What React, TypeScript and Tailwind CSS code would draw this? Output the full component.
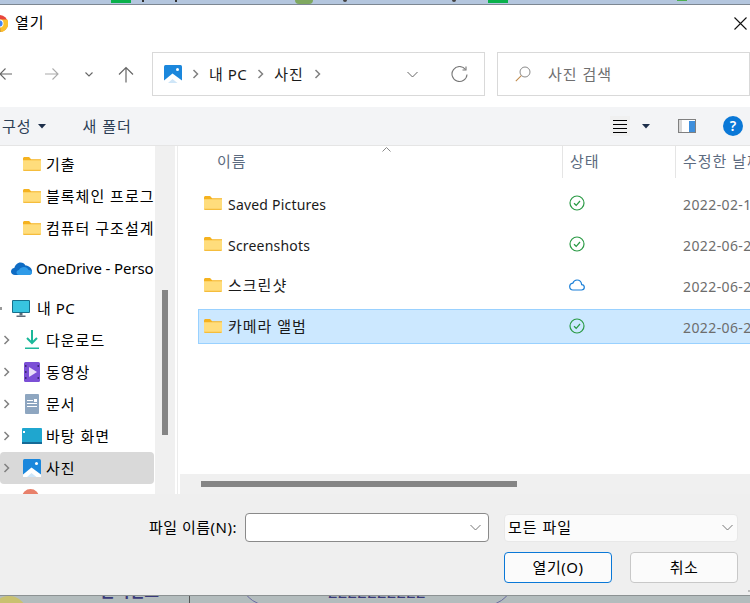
const FONT = "font-['Noto_Sans','Noto_Sans_CJK_KR',sans-serif]";
const KO = "text-[15px] tracking-[1px]";

function Folder({ className = "" }: { className?: string }) {
  return (
    <svg width="18" height="14" viewBox="0 0 18 14" className={className}>
      <path d="M0 1.5C0 .7.7 0 1.5 0h4.6l2 2.2H18V4H0z" fill="#f5b21f" />
      <path d="M0 3.2h18v9.6c0 .7-.5 1.2-1.2 1.2H1.2C.5 14 0 13.500 0 12.800z" fill="#ffdd7c" />
      <path d="M0 12.800h18c0 .7-.5 1.200-1.200 1.200H1.200C.5 14 0 13.500 0 12.800z" fill="#f5bd3c" />
    </svg>
  );
}

function Pictures({ size = 18 }: { size?: number }) {
  return (
    <svg width={size} height={size} viewBox="0 0 18 18">
      <rect width="18" height="18" rx="1.500" fill="#1b87dc" />
      <path d="M0 18V15.500L8.500 8.500L18 15.500V18z" fill="#fff" />
      <path d="M4 18L8.500 14L13.500 18z" fill="#cfe6f8" />
      <circle cx="13.500" cy="4.500" r="1.500" fill="#fff" />
    </svg>
  );
}

function Chevron() {
  return (
    <svg width="7" height="10" viewBox="0 0 7 10" className="shrink-0">
      <path d="M1.500 1L5.500 5L1.500 9" fill="none" stroke="#808080" strokeWidth="1.500" />
    </svg>
  );
}

function Down({ color = "#666" }: { color?: string }) {
  return (
    <svg width="11" height="7" viewBox="0 0 11 7">
      <path d="M.5 1L5.500 6L10.500 1" fill="none" stroke={color} strokeWidth="1" />
    </svg>
  );
}

function Caret() {
  return (
    <svg width="8" height="5" viewBox="0 0 8 5">
      <path d="M0 0H8L4 4.500z" fill="#1c2e4a" />
    </svg>
  );
}

function NavRow({ chevron, icon, label, selected }: { chevron?: boolean; icon: React.ReactNode; label: string; selected?: boolean }) {
  return (
    <div className={`h-8 w-[154px] shrink-0 flex items-center rounded-sm overflow-hidden ${selected ? "bg-[#d9d9d9]" : ""}`}>
      <div className="w-[20px] shrink-0 pl-[3px] flex items-center">{chevron ? <Chevron /> : null}</div>
      <div className="w-[26px] shrink-0 flex items-center justify-center -ml-[1px]">{icon}</div>
      <span className={`ml-[1px] ${KO} text-black whitespace-nowrap`}>{label}</span>
    </div>
  );
}

function Check() {
  return (
    <svg width="16" height="16" viewBox="0 0 16 16">
      <circle cx="8" cy="8" r="7" fill="none" stroke="#2a9a45" strokeWidth="1.200" />
      <path d="M5 8.200L7.200 10.300L11 6" fill="none" stroke="#2a9a45" strokeWidth="1.200" />
    </svg>
  );
}

function Cloud() {
  return (
    <svg width="16" height="12" viewBox="0 0 16 12">
      <path d="M4 11H12.500C14.200 11 15.300 9.800 15.300 8.300C15.300 6.800 14.200 5.700 12.700 5.600C12.300 3 10.500 1 8 1C6 1 4.500 2.200 3.800 4.200C2 4.400 .7 5.800 .7 7.600C.7 9.600 2.200 11 4 11z" fill="none" stroke="#1a7fd8" strokeWidth="1.200" />
    </svg>
  );
}

function FileRow({ name, date, status, selected, korean }: { name: string; date: string; status: React.ReactNode; selected?: boolean; korean?: boolean }) {
  return (
    <div className={`h-[35px] flex items-center border-y overflow-hidden ${selected ? "bg-[#cce8ff] border-[#99d1ff] border-l" : "border-transparent border-l border-l-transparent"}`}>
      <Folder className="ml-[5px] shrink-0 -mt-[2px]" />
      <span className={`ml-[6px] w-[341px] shrink-0 text-[#1a1a1a] whitespace-nowrap ${korean ? KO : "text-[14px] tracking-[0.2px] mt-[2px]"}`}>{name}</span>
      <div className="w-[16px] shrink-0 flex justify-center -mt-[2px]">{status}</div>
      <span className="ml-[98px] mt-[2px] text-[14px] tracking-[0.4px] text-[#6d6d6d] whitespace-nowrap">{date}</span>
    </div>
  );
}

export default function App() {
  return (
    <div className={`w-[750px] h-[603px] overflow-hidden flex flex-col bg-white ${FONT}`}>
      {/* window behind, top */}
      <div className="h-[5px] shrink-0 bg-[#b4c6de] border-b border-[#7d8792] flex items-start">
        <div className="ml-[111px] w-[20px] h-[3px] bg-[#0ab14b]" />
        <div className="ml-[11px] w-[2px] h-[2px] bg-[#333]" />
        <div className="ml-[31px] w-[2px] h-[2px] bg-[#333]" />
        <div className="ml-[118px] w-[18px] h-[4px] rounded-b bg-[#7fa860]" />
        <div className="ml-[30px] w-[4px] h-[2px] rounded-b bg-[#444]" />
        <div className="ml-[105px] w-[4px] h-[2px] rounded-b bg-[#444]" />
        <div className="ml-[32px] w-[20px] h-[3px] bg-[#0ab14b]" />
        <div className="ml-[169px] w-[10px] h-[1px] bg-[#4caf50]" />
      </div>

      {/* title */}
      <div className="h-[36px] shrink-0 flex items-center">
        <svg width="17" height="17" viewBox="0 0 17 17" className="-ml-[9px] shrink-0">
          <circle cx="8.500" cy="8.500" r="8.500" fill="#e8453c" />
          <path d="M8.500 8.500L1.100 13a8.500 8.500 0 0 0 8.500 3.900z" fill="#34a853" />
          <path d="M8.500 4.500H16.300A8.500 8.500 0 0 1 9.500 17z" fill="#fbc02d" />
          <circle cx="8.500" cy="8.500" r="4" fill="#fff" />
          <circle cx="8.500" cy="8.500" r="3.100" fill="#4285f4" />
        </svg>
        <span className={`ml-[7px] ${KO} text-black -mt-[2px]`}>열기</span>
        <svg width="13" height="13" viewBox="0 0 13 13" className="ml-auto mr-[3px]">
          <path d="M.5 .5L12.500 12.500M12.500 .5L.5 12.500" stroke="#111" strokeWidth="1.100" />
        </svg>
      </div>

      {/* nav */}
      <div className="h-[66px] shrink-0 flex items-center">
        <svg width="14" height="14" viewBox="0 0 14 14" className="-ml-[1px] shrink-0">
          <path d="M13 7H1M6.500 1.500L1 7L6.500 12.500" fill="none" stroke="#666" strokeWidth="1.100" />
        </svg>
        <svg width="15" height="14" viewBox="0 0 15 14" className="ml-[31px] shrink-0">
          <path d="M1 7H14M8.500 1.500L14 7L8.500 12.500" fill="none" stroke="#aaa" strokeWidth="1.100" />
        </svg>
        <div className="ml-[26px]"><svg width="8" height="5" viewBox="0 0 8 5" className="block"><path d="M.5 .5L4 4L7.500 .5" fill="none" stroke="#666" strokeWidth="1.100" /></svg></div>
        <svg width="16" height="17" viewBox="0 0 16 17" className="ml-[25px] shrink-0">
          <path d="M8 16.500V1.500M1 8.500L8 1.500L15 8.500" fill="none" stroke="#666" strokeWidth="1.200" />
        </svg>
        <div className="ml-[18px] w-[333px] h-[44px] shrink-0 border border-[#d9d9d9] flex items-center">
          <div className="ml-[11px]"><Pictures /></div>
          <div className="ml-[10px]"><Chevron /></div>
          <span className="ml-[10px] text-[15px] tracking-[0.5px] text-[#1a1a1a] whitespace-nowrap">내 PC</span>
          <div className="ml-[10px]"><Chevron /></div>
          <span className={`ml-[10px] ${KO} text-[#1a1a1a]`}>사진</span>
          <div className="ml-[10px]"><Chevron /></div>
          <div className="ml-auto"><Down /></div>
          <svg width="17" height="17" viewBox="0 0 17 17" className="ml-[33px] mr-[16px]">
            <path d="M14.500 3.500A7.500 7.500 0 1 0 16 8.500" fill="none" stroke="#777" strokeWidth="1.100" />
            <path d="M15 .5V4H11.500" fill="none" stroke="#777" strokeWidth="1.100" />
          </svg>
        </div>
        <div className="ml-[12px] w-[253px] h-[44px] shrink-0 border border-[#d9d9d9] flex items-center">
          <svg width="16" height="16" viewBox="0 0 16 16" className="ml-[17px]">
            <circle cx="10" cy="6" r="5" fill="none" stroke="#8a8a8a" strokeWidth="1" />
            <path d="M6.300 9.700L.8 15.200" stroke="#c08a4a" strokeWidth="1.100" />
          </svg>
          <span className={`ml-[17px] ${KO} text-[#6f6f6f]`}>사진 검색</span>
        </div>
      </div>

      {/* toolbar */}
      <div className={`h-[39px] shrink-0 bg-[#f3f4f6] border-b border-[#e5e5e5] flex items-center ${KO} text-[#2c3e55]`}>
        <span className="ml-[2px] whitespace-nowrap">구성</span>
        <div className="ml-[6px]"><Caret /></div>
        <span className="ml-[37px] whitespace-nowrap">새 폴더</span>
        <div className="ml-auto w-[20px] h-[20px] bg-[#f0f0f0] flex flex-col justify-center gap-[3px] px-[3px]">
          <div className="h-px bg-black" />
          <div className="h-px bg-black" />
          <div className="h-px bg-black" />
          <div className="h-px bg-black" />
        </div>
        <div className="ml-[12px]"><Caret /></div>
        <svg width="18" height="14" viewBox="0 0 18 14" className="ml-[28px]">
          <rect x=".5" y=".5" width="17" height="13" fill="#fff" stroke="#808080" />
          <rect x="1" y="1" width="3" height="12" fill="#d8d8d8" />
          <rect x="11" y="2" width="6" height="11" fill="#3f8fdc" />
        </svg>
        <div className="ml-[27px] mr-[7px] w-[20px] h-[20px] rounded-full bg-[#0a78d7] flex items-center justify-center text-white text-[14px] tracking-normal font-semibold leading-none">?</div>
      </div>

      {/* main */}
      <div className="h-[348px] shrink-0 flex">
        <div className="w-[155px] shrink-0 overflow-hidden flex flex-col pt-[2px]">
          <NavRow icon={<Folder />} label="기출" />
          <NavRow icon={<Folder />} label="블록체인 프로그램" />
          <NavRow icon={<Folder />} label="컴퓨터 구조설계" />
          <div className="h-2 shrink-0" />
          <div className="h-8 w-[155px] shrink-0 flex items-center overflow-hidden">
            <svg width="21" height="13" viewBox="0 0 21 13" className="ml-[11px] shrink-0">
              <path d="M4 13C1.700 13 0 11.500 0 9.500C0 7.500 1.500 6.200 3.300 6C4 3 6.500 .5 9.500 .5C11.800 .5 13.500 1.700 14.500 3.500C17.500 3.500 21 6 21 9.500C21 11.500 19.500 13 17.500 13z" fill="#0f6cc4" />
              <path d="M8 13C6.500 13 5.500 12 5.500 10.500C5.500 9 6.800 8 8 8C9 5.800 11 5 13 5C15.500 5 17 6.500 17.500 8C19.500 8 21 9 21 10.500C21 12 20 13 18.500 13z" fill="#2f9be8" />
            </svg>
            <span className="ml-[4px] text-[15px] tracking-[-0.1px] text-black whitespace-nowrap">OneDrive - Perso</span>
          </div>
          <div className="h-2 shrink-0" />
          <div className="h-8 w-[154px] shrink-0 flex items-center">
            <div className="w-[2px] h-[3px] bg-[#999] shrink-0" />
            <svg width="18" height="17" viewBox="0 0 18 17" className="ml-[10px] shrink-0">
              <rect width="18" height="13" rx="1" fill="#17708c" />
              <rect x="1" y="1" width="16" height="11" fill="#38c4e0" />
              <rect x="7.500" y="13" width="3" height="2.500" fill="#5f6b78" />
              <rect x="4.500" y="15.500" width="9" height="1.500" fill="#5f6b78" />
            </svg>
            <span className="ml-[7px] text-[15px] tracking-[0.5px] text-black whitespace-nowrap">내 PC</span>
          </div>
          <NavRow
            chevron
            icon={
              <svg width="14" height="20" viewBox="0 0 14 20">
                <path d="M7 0V13M2 8L7 13L12 8" fill="none" stroke="#1cb89a" strokeWidth="2" />
                <rect y="17.500" width="14" height="1.500" fill="#1cb89a" />
              </svg>
            }
            label="다운로드"
          />
          <NavRow
            chevron
            icon={
              <svg width="16" height="20" viewBox="0 0 16 20">
                <rect width="16" height="20" rx="1.500" fill="#7b4fd6" />
                <path d="M5 5V15L13 10z" fill="#e8ddf8" />
                <rect x="1" y="3" width="1.500" height="2" fill="#3c2a78" />
                <rect x="1" y="9" width="1.500" height="2" fill="#3c2a78" />
                <rect x="1" y="15" width="1.500" height="2" fill="#3c2a78" />
                <rect x="13.500" y="3" width="1.500" height="2" fill="#3c2a78" />
                <rect x="13.500" y="15" width="1.500" height="2" fill="#3c2a78" />
              </svg>
            }
            label="동영상"
          />
          <NavRow
            chevron
            icon={
              <svg width="14" height="20" viewBox="0 0 14 20">
                <rect width="14" height="20" rx="1" fill="#8ea6c0" />
                <rect x="2" y="6" width="6" height="1" fill="#fff" />
                <rect x="2" y="9" width="10" height="1" fill="#fff" />
                <rect x="2" y="12" width="10" height="1" fill="#fff" />
                <rect x="9" y="5" width="3" height="3" fill="#fff" />
              </svg>
            }
            label="문서"
          />
          <NavRow
            chevron
            icon={
              <svg width="20" height="16" viewBox="0 0 20 16">
                <rect width="20" height="16" rx="1" fill="#1fa6cf" />
                <rect y="14" width="20" height="2" fill="#156a96" />
                <rect x="1" y="3" width="2" height="2" fill="#fff" />
              </svg>
            }
            label="바탕 화면"
          />
          <NavRow chevron icon={<Pictures />} label="사진" selected />
          <div className="h-8 shrink-0 flex items-start pl-[22px] pt-[5px]">
            <div className="w-[17px] h-[17px] rounded-full bg-[#e8806a]" />
          </div>
        </div>
        <div className="w-[20px] shrink-0 bg-[#f0f0f0] pl-[7px] pt-[144px]">
          <div className="w-[6px] h-[145px] bg-[#858585]" />
        </div>
        <div className="w-[2px] shrink-0 bg-white" />
        <div className="w-px shrink-0 bg-[#ececec]" />
        <div className="w-[2px] shrink-0 bg-white" />
        <div className="flex-1 min-w-0 flex flex-col">
          <div className="flex-1 min-h-0 overflow-hidden flex flex-col">
            <div className={`h-[32px] shrink-0 flex ${KO} text-[#5c6b80]`}>
              <div className="w-[382px] shrink-0 flex pl-[37px] pt-[4px] relative">
                <span>이름</span>
                <svg width="9" height="5" viewBox="0 0 9 5" className="absolute left-[202px] top-[1px]">
                  <path d="M.5 4.500L4.500 .5L8.500 4.500" fill="none" stroke="#888" strokeWidth="1" />
                </svg>
              </div>
              <div className="w-[113px] shrink-0 border-l border-[#e5e5e5] pl-[7px] pt-[4px]">상태</div>
              <div className="flex-1 border-l border-[#e5e5e5] pl-[7px] pt-[4px] whitespace-nowrap overflow-hidden">수정한 날짜</div>
            </div>
            <div className="pl-[18px] pt-[8px] flex flex-col gap-[6px]">
              <FileRow name="Saved Pictures" date="2022-02-15" status={<Check />} />
              <FileRow name="Screenshots" date="2022-06-20" status={<Check />} />
              <FileRow name="스크린샷" korean date="2022-06-20" status={<Cloud />} />
              <FileRow name="카메라 앨범" korean date="2022-06-20" status={<Check />} selected />
            </div>
          </div>
          <div className="h-[20px] shrink-0 bg-[#f0f0f0] pl-[21px] pt-[7px]">
            <div className="w-[316px] h-[6px] bg-[#858585]" />
          </div>
        </div>
      </div>

      {/* bottom panel */}
      <div className="relative h-[101px] shrink-0 bg-[#efefef] flex flex-col items-end pt-[19px] pr-[12px] gap-[10px]">
        <div className="flex items-center">
          <span className="text-[15px] tracking-[0.5px] text-black whitespace-nowrap">파일 이름(N):</span>
          <div className="ml-[8px] w-[244px] h-[29px] bg-white border border-[#8a8a8a] rounded-sm flex items-center justify-end pr-[7px]">
            <Down color="#777" />
          </div>
          <div className={`ml-[15px] w-[234px] h-[28px] bg-[#fbfbfb] border border-[#e8e8e8] rounded-sm flex items-center pl-[3px] pr-[4px] ${KO} text-black`}>
            <span>모든 파일</span>
            <div className="ml-auto"><Down color="#777" /></div>
          </div>
        </div>
        <div className="flex gap-[18px] text-[15px] tracking-[0.5px] text-black">
          <div className="w-[108px] h-[31px] bg-[#fbfbfb] border border-[#0a78d7] rounded-[4px] flex items-center justify-center">열기(O)</div>
          <div className="w-[108px] h-[31px] bg-[#fbfbfb] border border-[#c8c8c8] rounded-[4px] flex items-center justify-center">취소</div>
        </div>
        <div className="absolute right-0 bottom-[3px] w-[2px] h-[2px] bg-[#bbb]" />
      </div>

      {/* window behind, bottom */}
      <div className="flex-1 min-h-0 bg-[#b3bcbd] border-t border-[#8c9293] flex items-start overflow-hidden text-[#3a3a7a] leading-none">
        <div className="-ml-[9px] w-[36px] h-[36px] rounded-full bg-[#c9c170] shrink-0" />
        <span className="ml-[73px] -mt-[13px] text-[16px] font-semibold whitespace-nowrap">관리번호</span>
        <div className="ml-[30px] w-px h-full bg-[#555]" />
        <div className="ml-[49px] w-[276px] h-[60px] rounded-[30px] border border-[#6a6aa0] -mt-[50px] shrink-0 flex items-end justify-center pb-[4px]">
          <span className="text-[17px] tracking-[0.3px] font-['Liberation_Sans',sans-serif] whitespace-nowrap">2222222222</span>
        </div>
      </div>
    </div>
  );
}
